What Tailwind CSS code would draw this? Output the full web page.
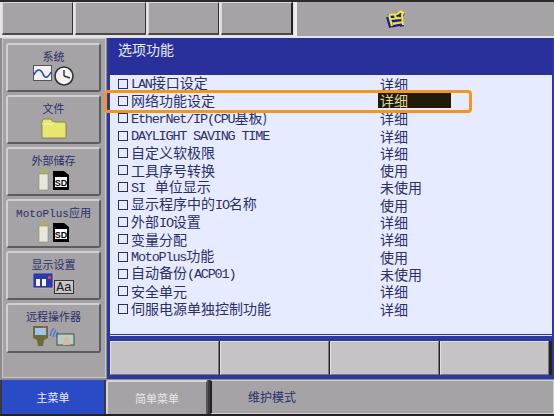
<!DOCTYPE html>
<html lang="zh">
<head>
<meta charset="utf-8">
<script src="https://cdn.jsdelivr.net/npm/@tailwindcss/browser@4"></script>
</head>
<body class="m-0 bg-[#a5a3a5]">
<div class="relative w-[554px] h-[416px] overflow-hidden bg-[#8c8a8c] font-['Noto_Sans_CJK_SC',sans-serif] text-[14px] leading-none text-[#2a2f6a]">

  <!-- top bar -->
  <div class="flex h-[38px] bg-[#e4e4e4] border-t-2 border-[#2a2a2a] pl-[2px] gap-[2px]">
    <div class="w-[71px] h-[33px] bg-[#a5a3a5] border border-[#d8d8d8] border-r-[#333] border-b-[#4a4a4a] border-b-2"></div>
    <div class="w-[71px] h-[33px] bg-[#a5a3a5] border border-[#d8d8d8] border-r-[#333] border-b-[#4a4a4a] border-b-2"></div>
    <div class="w-[71px] h-[33px] bg-[#a5a3a5] border border-[#d8d8d8] border-r-[#333] border-b-[#4a4a4a] border-b-2"></div>
    <div class="w-[72px] h-[33px] bg-[#a5a3a5] border border-[#d8d8d8] border-r-[#222] border-r-2 border-b-[#4a4a4a] border-b-2"></div>
    <div class="flex-1 h-[34px] bg-[#a5a3a5] border-l-2 border-[#f0f0f0] flex pt-[8px] pl-[89px]">
      <svg width="21" height="20" viewBox="0 0 21 20">
        <path d="M3 5 L11 4 L14 2 M14 1 L17 3 L16 5 L17 15 M4 9 L15 8 M7 14 L17 12 M3 5 L6 16 M9 5 L10 9" stroke="#1c1f8c" stroke-width="4" fill="none" transform="translate(-1 1.5)"/>
        <path d="M3 5 L11 4 L14 2 M14 1 L17 3 L16 5 L17 15 M4 9 L15 8 M7 14 L17 12 M3 5 L6 16 M9 5 L10 9" stroke="#f4e83c" stroke-width="2.2" fill="none"/>
      </svg>
    </div>
  </div>

  <div class="flex h-[342px]">
    <!-- side menu -->
    <div class="w-[104px] ml-[2px] h-[340px] bg-[#a5a3a5] border border-[#c8c8c8] pl-[3px] pt-[4px] flex flex-col gap-[3px]">
      <div class="w-[95px] h-[49px] rounded-[3px] bg-[#a5a3a5] border-2 border-[#cfcfcf] border-r-[#5c5c5c] border-b-[#5c5c5c] flex flex-col items-center pt-[4px]">
        <span class="text-[11px] h-[15px] leading-[15px]">系统</span>
        <svg width="42" height="21" viewBox="0 0 42 21" class="mt-[1px]">
          <rect x="0.5" y="0.5" width="18" height="15" fill="#f2f2f2" stroke="#555"/>
          <path d="M1 10 C4 3 8 4 10 9 S15 13 18 7" stroke="#2447c8" stroke-width="1.6" fill="none"/>
          <circle cx="31" cy="11" r="9" fill="#f2f2f2" stroke="#333" stroke-width="1.6"/>
          <path d="M31 11 L31 5 M31 11 L37 13" stroke="#333" stroke-width="1.4"/>
        </svg>
      </div>
      <div class="w-[95px] h-[49px] rounded-[3px] bg-[#a5a3a5] border-2 border-[#cfcfcf] border-r-[#5c5c5c] border-b-[#5c5c5c] flex flex-col items-center pt-[4px]">
        <span class="text-[11px] h-[15px] leading-[15px]">文件</span>
        <svg width="26" height="21" viewBox="0 0 26 21" class="mt-[2px]">
          <path d="M1 20 L1 3 L3 1 L10 1 L12 4 L24 4 L25 6 L25 20 Z" fill="#e6e670" stroke="#77773a" stroke-width="0.8"/>
          <path d="M1 6 L12 6 L13 4" stroke="#f8f8b0" fill="none"/>
        </svg>
      </div>
      <div class="w-[95px] h-[49px] rounded-[3px] bg-[#a5a3a5] border-2 border-[#cfcfcf] border-r-[#5c5c5c] border-b-[#5c5c5c] flex flex-col items-center pt-[4px]">
        <span class="text-[11px] h-[15px] leading-[15px]">外部储存</span>
        <svg width="32" height="21" viewBox="0 0 32 21" class="mt-[2px]">
          <rect x="3" y="0" width="6" height="4" fill="#b3b050"/>
          <rect x="1" y="4" width="9" height="16" fill="#e8e8d8" stroke="#8a8a80" stroke-width="0.6"/>
          <path d="M15 1 L26 1 L31 5 L31 20 L15 20 Z" fill="#000"/>
          <rect x="17" y="7" width="12" height="10" fill="#fff"/>
          <text x="23" y="15.5" font-size="9" font-weight="bold" text-anchor="middle" fill="#000" font-family="Liberation Sans">SD</text>
        </svg>
      </div>
      <div class="w-[95px] h-[49px] rounded-[3px] bg-[#a5a3a5] border-2 border-[#cfcfcf] border-r-[#5c5c5c] border-b-[#5c5c5c] flex flex-col items-center pt-[4px]">
        <span class="text-[11px] h-[15px] leading-[15px] whitespace-nowrap"><span class="font-['Liberation_Mono',monospace] text-[11px]">MotoPlus</span>应用</span>
        <svg width="32" height="21" viewBox="0 0 32 21" class="mt-[2px]">
          <rect x="3" y="0" width="6" height="4" fill="#b3b050"/>
          <rect x="1" y="4" width="9" height="16" fill="#e8e8d8" stroke="#8a8a80" stroke-width="0.6"/>
          <path d="M15 1 L26 1 L31 5 L31 20 L15 20 Z" fill="#000"/>
          <rect x="17" y="7" width="12" height="10" fill="#fff"/>
          <text x="23" y="15.5" font-size="9" font-weight="bold" text-anchor="middle" fill="#000" font-family="Liberation Sans">SD</text>
        </svg>
      </div>
      <div class="w-[95px] h-[49px] rounded-[3px] bg-[#a5a3a5] border-2 border-[#cfcfcf] border-r-[#5c5c5c] border-b-[#5c5c5c] flex flex-col items-center pt-[4px]">
        <span class="text-[11px] h-[15px] leading-[15px]">显示设置</span>
        <svg width="42" height="21" viewBox="0 0 42 21" class="mt-[1px]">
          <rect x="0" y="0" width="20" height="15" fill="#2b3aa8" stroke="#ccc" stroke-width="0.6"/>
          <rect x="3" y="6" width="10" height="7" fill="#f4f4f4"/>
          <rect x="7" y="6" width="2" height="7" fill="#2b3aa8"/>
          <rect x="15" y="3" width="3" height="3" fill="#e0443c"/>
          <rect x="21.5" y="7.5" width="19" height="13" fill="#c8c8c8" stroke="#333"/>
          <text x="31" y="18" font-size="13" text-anchor="middle" fill="#222" font-family="Liberation Mono">Aa</text>
        </svg>
      </div>
      <div class="w-[95px] h-[50px] rounded-[3px] bg-[#a5a3a5] border-2 border-[#cfcfcf] border-r-[#5c5c5c] border-b-[#5c5c5c] flex flex-col items-center pt-[4px]">
        <span class="text-[11px] h-[15px] leading-[15px]">远程操作器</span>
        <svg width="42" height="21" viewBox="0 0 42 21" class="mt-[2px]">
          <path d="M0 0 L15 0 L15 12 L11 14 L10 20 L5 20 L4 14 L0 12 Z" fill="#6e6a3a"/>
          <rect x="2" y="2" width="11" height="7" fill="#9fc6e8"/>
          <rect x="10" y="0" width="3" height="2" fill="#e0443c"/>
          <path d="M17 10 Q18 5 21 2 M20 11 Q21 7 23 4 M23 11 Q24 8 25 6" stroke="#4a78d8" stroke-width="1.4" fill="none"/>
          <rect x="24" y="8" width="17" height="11" fill="#b8d0c0" stroke="#3c5048"/>
          <path d="M30 19 L31 12 L34 10 L36 13 L37 19 Z" fill="#d8b8a0"/>
        </svg>
      </div>
    </div>

    <!-- main -->
    <div class="ml-px flex-1 flex flex-col bg-[#2c389c] pl-[3px] pr-[2px] h-[341px]">
      <div class="h-[37px] bg-[#29309c] text-[#e7ebff] pl-[8px] pt-[4px]">选项功能</div>
      <div class="h-[259px] bg-[#e7ebff] pl-[8px] flex flex-col whitespace-pre">
        <div class="flex h-[17.3px] items-center"><span class="flex-none w-[10px] h-[10px] border border-[#2a2f6a] mr-[3px]"></span><div class="w-[247px] leading-[15px]"><span class="font-['Liberation_Mono',monospace] text-[13.5px] tracking-[-1.2px]">LAN</span>接口设定</div><div class="pl-[2px]">详细</div></div>
        <div class="flex h-[17.3px] items-center"><span class="flex-none w-[10px] h-[10px] border border-[#2a2f6a] mr-[3px]"></span><div class="w-[247px] leading-[15px]">网络功能设定</div><div class="pl-[2px] w-[73px] h-[15px] bg-[#211c08] text-[#ddd8a0]">详细</div></div>
        <div class="flex h-[17.3px] items-center"><span class="flex-none w-[10px] h-[10px] border border-[#2a2f6a] mr-[3px]"></span><div class="w-[247px] leading-[15px]"><span class="font-['Liberation_Mono',monospace] text-[13.5px] tracking-[-1.2px]">EtherNet/IP(CPU</span>基板)</div><div class="pl-[2px]">详细</div></div>
        <div class="flex h-[17.3px] items-center"><span class="flex-none w-[10px] h-[10px] border border-[#2a2f6a] mr-[3px]"></span><div class="w-[247px] leading-[15px]"><span class="font-['Liberation_Mono',monospace] text-[13.5px] tracking-[-1.2px]">DAYLIGHT SAVING TIME</span></div><div class="pl-[2px]">详细</div></div>
        <div class="flex h-[17.3px] items-center"><span class="flex-none w-[10px] h-[10px] border border-[#2a2f6a] mr-[3px]"></span><div class="w-[247px] leading-[15px]">自定义软极限</div><div class="pl-[2px]">详细</div></div>
        <div class="flex h-[17.3px] items-center"><span class="flex-none w-[10px] h-[10px] border border-[#2a2f6a] mr-[3px]"></span><div class="w-[247px] leading-[15px]">工具序号转换</div><div class="pl-[2px]">使用</div></div>
        <div class="flex h-[17.3px] items-center"><span class="flex-none w-[10px] h-[10px] border border-[#2a2f6a] mr-[3px]"></span><div class="w-[247px] leading-[15px]"><span class="font-['Liberation_Mono',monospace] text-[13.5px] tracking-[-1.2px]">SI </span> 单位显示</div><div class="pl-[2px]">未使用</div></div>
        <div class="flex h-[17.3px] items-center"><span class="flex-none w-[10px] h-[10px] border border-[#2a2f6a] mr-[3px]"></span><div class="w-[247px] leading-[15px]">显示程序中的<span class="font-['Liberation_Mono',monospace] text-[13.5px] tracking-[-1.2px]">IO</span>名称</div><div class="pl-[2px]">使用</div></div>
        <div class="flex h-[17.3px] items-center"><span class="flex-none w-[10px] h-[10px] border border-[#2a2f6a] mr-[3px]"></span><div class="w-[247px] leading-[15px]">外部<span class="font-['Liberation_Mono',monospace] text-[13.5px] tracking-[-1.2px]">IO</span>设置</div><div class="pl-[2px]">详细</div></div>
        <div class="flex h-[17.3px] items-center"><span class="flex-none w-[10px] h-[10px] border border-[#2a2f6a] mr-[3px]"></span><div class="w-[247px] leading-[15px]">变量分配</div><div class="pl-[2px]">详细</div></div>
        <div class="flex h-[17.3px] items-center"><span class="flex-none w-[10px] h-[10px] border border-[#2a2f6a] mr-[3px]"></span><div class="w-[247px] leading-[15px]"><span class="font-['Liberation_Mono',monospace] text-[13.5px] tracking-[-1.2px]">MotoPlus</span>功能</div><div class="pl-[2px]">使用</div></div>
        <div class="flex h-[17.3px] items-center"><span class="flex-none w-[10px] h-[10px] border border-[#2a2f6a] mr-[3px]"></span><div class="w-[247px] leading-[15px]">自动备份<span class="font-['Liberation_Mono',monospace] text-[13.5px] tracking-[-1.2px]">(ACP01)</span></div><div class="pl-[2px]">未使用</div></div>
        <div class="flex h-[17.3px] items-center"><span class="flex-none w-[10px] h-[10px] border border-[#2a2f6a] mr-[3px]"></span><div class="w-[247px] leading-[15px]">安全单元</div><div class="pl-[2px]">详细</div></div>
        <div class="flex h-[17.3px] items-center"><span class="flex-none w-[10px] h-[10px] border border-[#2a2f6a] mr-[3px]"></span><div class="w-[247px] leading-[15px]">伺服电源单独控制功能</div><div class="pl-[2px]">详细</div></div>
      </div>
      <div class="h-[6px] border-t border-[#dfe2f4] bg-[#2c389c] mt-[1px]"></div>
      <div class="flex h-[34px] bg-[#222] gap-px">
        <div class="w-[109px] bg-[#c6c3c6] border border-[#e0e0e0] border-r-[#777] border-b-[#777]"></div>
        <div class="w-[109px] bg-[#c6c3c6] border border-[#e0e0e0] border-r-[#777] border-b-[#777]"></div>
        <div class="w-[109px] bg-[#c6c3c6] border border-[#e0e0e0] border-r-[#777] border-b-[#777]"></div>
        <div class="w-[109px] bg-[#c6c3c6] border border-[#e0e0e0] border-r-[#777] border-b-[#777]"></div>
      </div>
    </div>
  </div>

  <!-- bottom bar -->
  <div class="flex h-[36px] bg-[#3a3a3a] border-b-2 border-[#222] gap-px">
    <div class="ml-[2px] w-[102px] bg-[#2b4bc6] text-[#e7ebff] text-[11px] flex items-center justify-center">主菜单</div>
    <div class="w-[102px] ml-px bg-[#a5a3a5] border-2 border-[#d6d6d6] border-r-[#555] border-b-0 rounded-t-[2px] text-[#e8e8e8] text-[11px] flex items-center justify-center">简单菜单</div>
    <div class="flex-1 ml-px bg-[#a5a3a5] border border-[#d0d0d0] border-l-[#222] border-l-2 text-[12px] pl-[36px] flex items-center">维护模式</div>
  </div>

  <!-- orange highlight -->
  <div class="absolute left-[104px] top-[90px] w-[368px] h-[23px] border-[3px] border-[#f7941d] rounded-[4px]"></div>
</div>
</body>
</html>
